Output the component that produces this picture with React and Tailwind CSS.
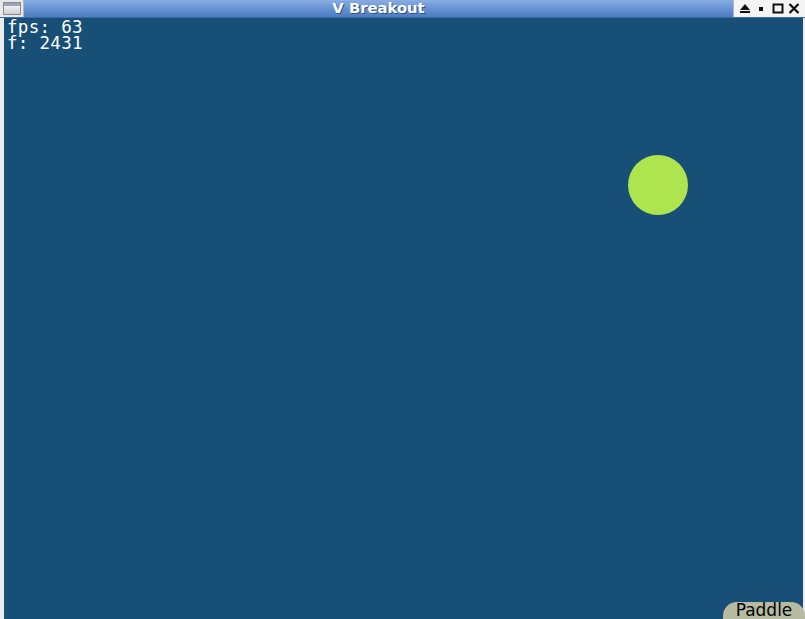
export default function App() {
    return (
        <div className="w-[805px] h-[619px] flex flex-col bg-[#ececec] overflow-hidden">
            {/* title bar */}
            <div className="h-[18px] flex shrink-0 border-b border-[#3a6aa8]">
                <div className="w-[24px] bg-[#e9e9e9] flex items-center justify-center border-r border-[#b5b5b5]">
                    <div className="w-[18px] h-[13px] border border-[#8a8a8a] bg-gradient-to-b from-[#fdfdfd] to-[#cfcfcf] flex flex-col">
                        <div className="h-[3px] bg-[#9aa6b6]" />
                    </div>
                </div>
                <div className="flex-1 flex items-center justify-center bg-gradient-to-b from-[#88aee2] via-[#6893d2] to-[#4c7cc0]">
                    <span
                        className="text-white font-bold text-[14.8px] leading-none [text-shadow:1px_1px_0_#2b4f80]"
                        style={{ fontFamily: '"DejaVu Sans", sans-serif' }}
                    >
                        V Breakout
                    </span>
                </div>
                <div className="w-[72px] bg-[#f4f4f4] flex items-center justify-around px-[3px] border-l border-[#b5b5b5]">
                    <svg width="12" height="11" viewBox="0 0 12 11">
                        <polygon points="6,1 11,7 1,7" fill="#111" />
                        <rect x="1" y="8" width="10" height="2" fill="#111" />
                    </svg>
                    <svg width="12" height="11" viewBox="0 0 12 11">
                        <rect x="4" y="4" width="4" height="4" fill="#111" />
                    </svg>
                    <svg width="12" height="11" viewBox="0 0 12 11">
                        <rect x="1.5" y="1.5" width="9" height="8" fill="none" stroke="#111" strokeWidth="2" />
                    </svg>
                    <svg width="12" height="11" viewBox="0 0 12 11">
                        <path d="M1.5 1 L10.5 10 M10.5 1 L1.5 10" stroke="#111" strokeWidth="2.2" />
                    </svg>
                </div>
            </div>

            {/* game canvas */}
            <div className="flex-1 flex pl-[4px] pr-[2px]">
                <div className="relative flex-1 bg-[#184f76]">
                    <div
                        className="absolute left-[3px] top-[1px] text-white text-[17.5px] leading-[16px] tracking-[0.3px]"
                        style={{ fontFamily: '"DejaVu Sans Mono", monospace' }}
                    >
                        <div>fps: 63</div>
                        <div>f: 2431</div>
                    </div>
                    <div className="absolute left-[624px] top-[137px] w-[60px] h-[60px] rounded-full bg-[#aee54e]" />
                    <div
                        className="absolute right-[-2px] bottom-0 w-[82px] h-[17px] rounded-t-[14px] bg-[#b7bba2] flex items-end justify-center text-black text-[17px] leading-[17px]"
                        style={{ fontFamily: '"DejaVu Sans", sans-serif' }}
                    >
                        Paddle
                    </div>
                </div>
            </div>
        </div>
    );
}
